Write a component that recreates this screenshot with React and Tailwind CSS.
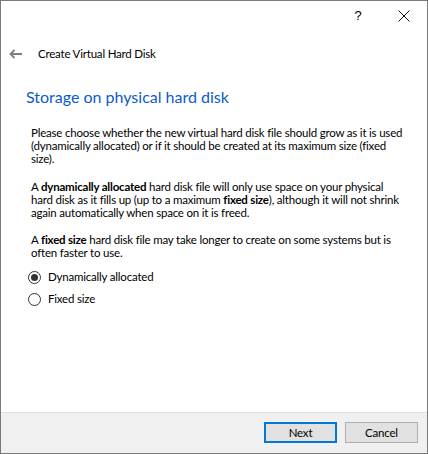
// Windows-style wizard page: "Storage on physical hard disk"
export default function App() {
  return (
    <div className="w-[428px] h-[454px] flex flex-col bg-white border border-[#7a7a7a] text-black font-['Lato',sans-serif]">
      <TitleBar />

      {/* back arrow + wizard title */}
      <div className="h-[46px] flex items-center">
        <svg className="ml-[8px]" width="13" height="10" viewBox="0 0 13 10" fill="none" stroke="#7f7f7f" strokeWidth="1.8">
          <path d="M13 5H1.5M5.5 1L1.5 5l4 4" />
        </svg>
        <span className="ml-[16px] text-[11.5px] tracking-[-0.2px]">Create Virtual Hard Disk</span>
      </div>

      <h1 className="mt-[10px] ml-[25px] text-[16px] leading-[20px] text-[#0c5bc6]">
        Storage on physical hard disk
      </h1>

      <div className="mt-[19px] ml-[30px] text-[11.5px] leading-[13px] tracking-[-0.2px] whitespace-nowrap">
        <p>
          Please choose whether the new virtual hard disk file should grow as it is used<br />
          (dynamically allocated) or if it should be created at its maximum size (fixed<br />
          size).
        </p>
        <p className="mt-[14.5px]">
          A <b>dynamically allocated</b> hard disk file will only use space on your physical<br />
          hard disk as it fills up (up to a maximum <b>fixed size</b>), although it will not shrink<br />
          again automatically when space on it is freed.
        </p>
        <p className="mt-[14.5px]">
          A <b>fixed size</b> hard disk file may take longer to create on some systems but is<br />
          often faster to use.
        </p>
      </div>

      <div className="mt-[7px] ml-[27px] flex flex-col">
        <Radio label="Dynamically allocated" checked />
        <Radio label="Fixed size" />
      </div>

      <div className="flex-1" />

      <div className="h-[41px] border-t border-[#dfdfdf] bg-[#f0f0f0] flex items-start justify-end gap-[8px] pt-[9px] pr-[9px]">
        <Button label="Next" focused />
        <Button label="Cancel" />
      </div>
    </div>
  );
}

function TitleBar() {
  return (
    <div className="h-[30px] flex justify-end">
      <div className="w-[46px] flex items-center justify-center text-[13px] font-['Liberation_Sans',sans-serif]">?</div>
      <div className="w-[46px] flex items-center justify-center">
        <svg width="12" height="12" viewBox="0 0 12 12" stroke="#111" strokeWidth="1">
          <path d="M0.5 0.5l11 11M11.5 0.5l-11 11" />
        </svg>
      </div>
    </div>
  );
}

function Radio({ label, checked = false }) {
  return (
    <div className="h-[22px] flex items-center gap-[7px]">
      <span className="w-[13px] h-[13px] rounded-full border border-[#333] bg-white flex items-center justify-center">
        {checked && <span className="w-[7px] h-[7px] rounded-full bg-[#333]" />}
      </span>
      <span className="text-[11.5px] tracking-[-0.2px]">{label}</span>
    </div>
  );
}

function Button({ label, focused = false }) {
  return (
    <button
      className={
        focused
          ? "w-[73px] h-[21px] bg-[#e1e1e1] border-2 border-[#0078d7] text-[11.5px] tracking-[-0.2px] flex items-center justify-center"
          : "w-[73px] h-[21px] bg-[#e1e1e1] border border-[#adadad] text-[11.5px] tracking-[-0.2px] flex items-center justify-center"
      }
    >
      {label}
    </button>
  );
}
